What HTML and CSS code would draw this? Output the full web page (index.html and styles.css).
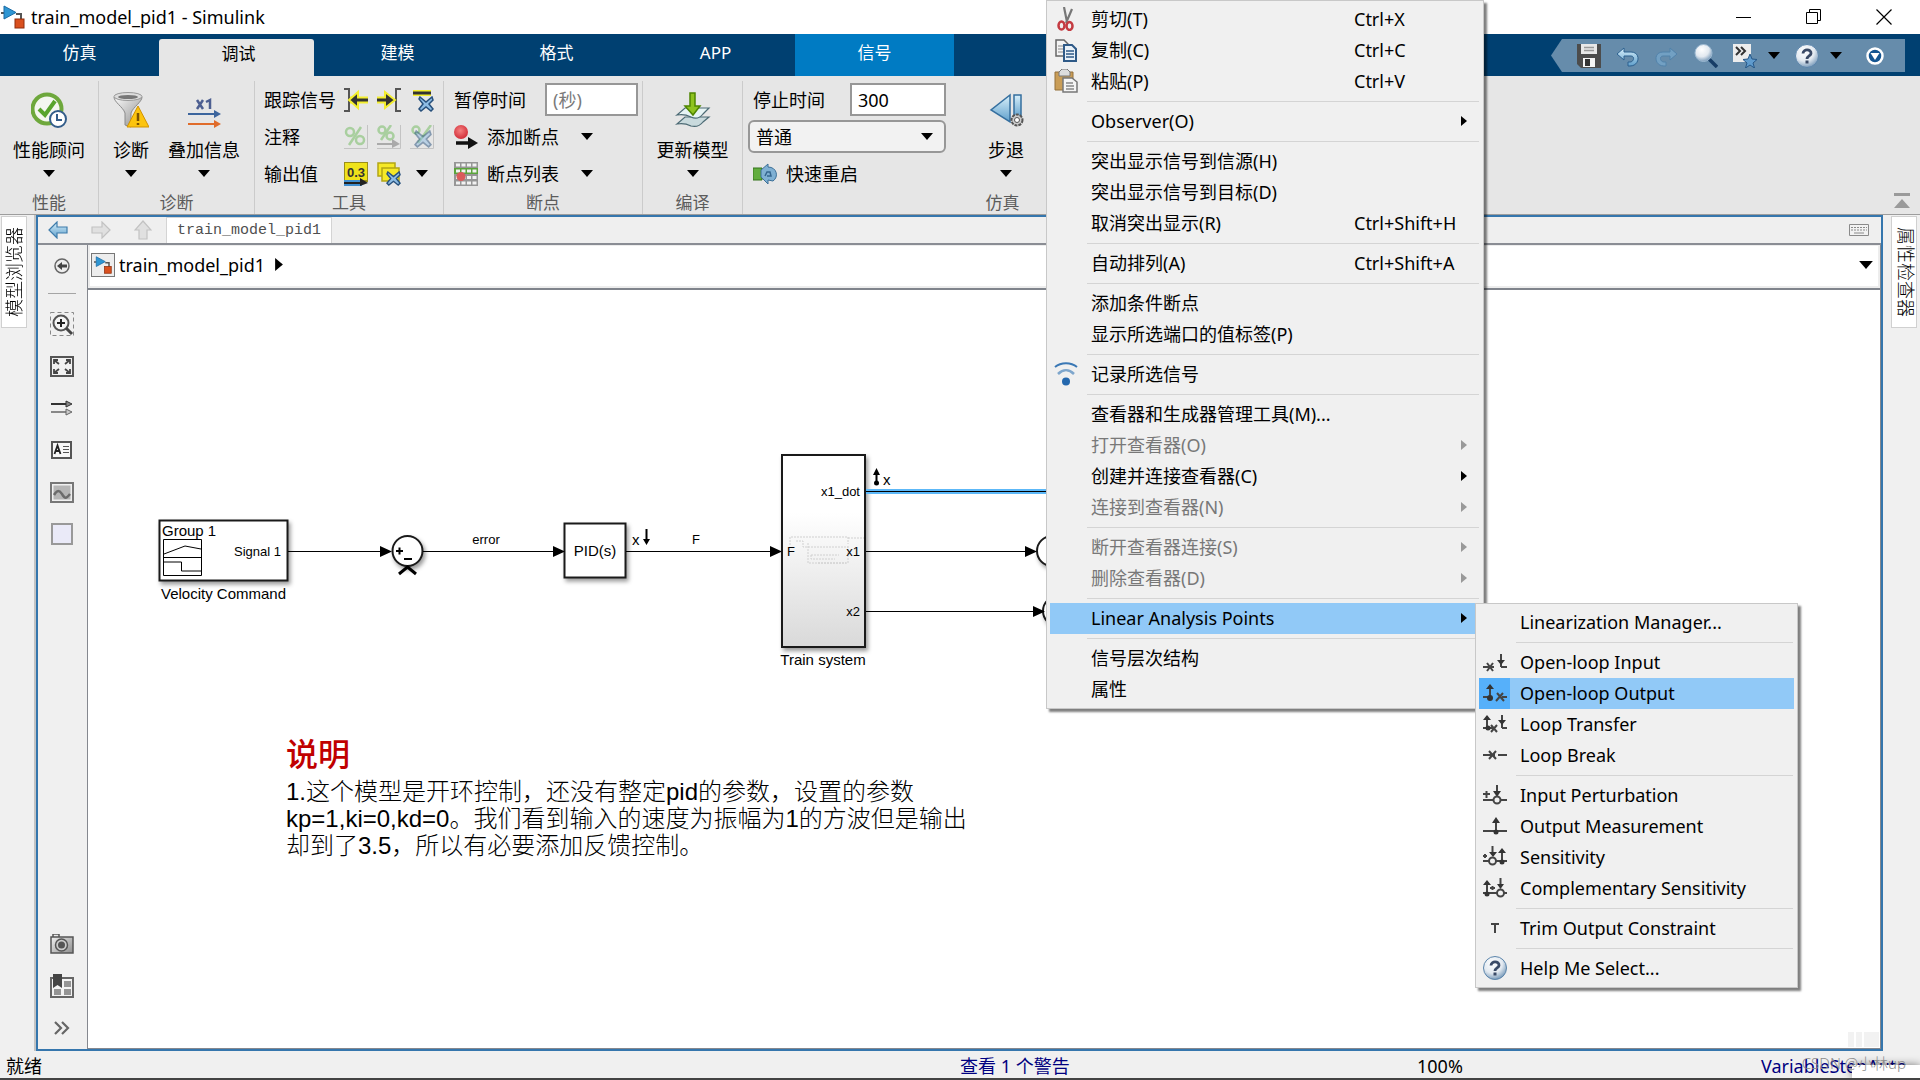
FILE: index.html
```html
<!DOCTYPE html>
<html lang="zh-CN">
<head>
<meta charset="utf-8">
<title>train_model_pid1 - Simulink</title>
<link rel="stylesheet" href="styles.css">
</head>
<body>
<svg class="defs" width="0" height="0" aria-hidden="true">
  <defs>
    <linearGradient id="gBlue" x1="0" y1="0" x2="0" y2="1"><stop offset="0" stop-color="#d8f0fb"/><stop offset="1" stop-color="#5f9fcb"/></linearGradient>
    <linearGradient id="gGrey" x1="0" y1="0" x2="1" y2="1"><stop offset="0" stop-color="#fafafa"/><stop offset="1" stop-color="#8c8c8c"/></linearGradient>
    <linearGradient id="gTrain" x1="0" y1="0" x2="0" y2="1"><stop offset=".3" stop-color="#fff"/><stop offset="1" stop-color="#d9d9d9"/></linearGradient>
    <radialGradient id="gHelp" cx=".4" cy=".3" r=".7"><stop offset="0" stop-color="#fff"/><stop offset=".6" stop-color="#e2e9f0"/><stop offset="1" stop-color="#7f9fbd"/></radialGradient>
    <radialGradient id="gRed" cx=".45" cy=".4" r=".6"><stop offset="0" stop-color="#f58080"/><stop offset="1" stop-color="#d22f3a"/></radialGradient>
  </defs>
  <symbol id="caret" viewBox="0 0 12 7"><path d="M0 0h12L6 7z"/></symbol>
  <symbol id="right" viewBox="0 0 6 10"><path d="M0 0l6 5-6 5z"/></symbol>
  <symbol id="model" viewBox="0 0 24 24"><path d="M0 8h3M15 9h5v6" stroke="#555" stroke-width="2" fill="none"/><path d="M3 1v13l12-6.500z" fill="#2e96d3" stroke="#1a6ba5"/><rect x="14" y="14" width="9" height="9" fill="#d9501e" stroke="#8f2d0c"/></symbol>
  <symbol id="cross" viewBox="0 0 16 16"><path d="M2 1l6 5 6-5 1 3-4 4 4 5-2 2-5-4-5 4-2-2 4-5-4-5z" fill="#8dbce4" stroke="#27507c" stroke-width="1.500"/></symbol>
  <symbol id="help" viewBox="0 0 24 24"><circle cx="12" cy="12" r="11.500" fill="url(#gHelp)" stroke="#5c85ab"/><path d="M8 9.500c0-5 8.500-4.500 8 0-.3 2.500-4 2.500-4 5.500" fill="none" stroke="#3a4a66" stroke-width="2.800"/><rect x="10.500" y="16.500" width="3" height="3" fill="#3a4a66"/></symbol>
</svg>

<header class="titlebar">
  <svg width="24" height="24"><use href="#model"/></svg>
  <h1>train_model_pid1 - Simulink</h1>
  <div class="wincontrols">
    <button aria-label="最小化"><svg width="16" height="16"><path d="M0 8.500h15" stroke="#000"/></svg></button>
    <button aria-label="还原"><svg width="16" height="16"><path d="M.5 3.500h11v11H.5zM3.500 3.500v-3h11v11h-3" fill="none" stroke="#000"/></svg></button>
    <button aria-label="关闭"><svg width="16" height="16"><path d="M.5.5l15 15M15.500.5l-15 15" stroke="#000" stroke-width="1.200"/></svg></button>
  </div>
</header>

<nav class="tabs">
  <button>仿真</button>
  <button class="active">调试</button>
  <button>建模</button>
  <button>格式</button>
  <button>APP</button>
  <button class="context">信号</button>
  <div class="quick">
    <button aria-label="保存"><svg width="24" height="24"><path d="M0 0h24v24H4l-4-4z" fill="#4c4c4c"/><path d="M4 0h16v10H4z" fill="#e8e8e8"/><path d="M7 3.500h10M7 6.500h10" stroke="#999" stroke-width="1.500"/><path d="M6 14h12v9H6z" fill="#f5f5f5"/><path d="M8 15h5v7H8z" fill="#333"/></svg></button>
    <button aria-label="撤销"><svg width="24" height="24"><path d="M8 4v4h7c10 0 9 14-1 14h-2v-4h2c4 0 5-6 1-6H8v4L1 10z" fill="url(#gBlue)" stroke="#2d618f"/></svg></button>
    <button aria-label="重做"><svg width="24" height="24" opacity=".5"><path d="M15 4v4H8c-10 0-9 14 1 14h2v-4H9c-4 0-5-6-1-6h7v4l7-6z" fill="#7fb3dc" stroke="#3d78a8"/></svg></button>
    <button aria-label="搜索"><svg width="24" height="24"><path d="M14 14l9 9" stroke="#173d66" stroke-width="3.500"/><circle cx="9.500" cy="9" r="8.500" fill="url(#gHelp)" stroke="#9db9d1"/></svg></button>
    <button class="withcaret" aria-label="收藏"><svg width="24" height="24"><path d="M0 0h18v18H0z" fill="#ededed"/><path d="M3 3l4 4-4 4M8 3l4 4-4 4" fill="none" stroke="#333" stroke-width="2"/><path d="M17 10l2 5 5 .5-4 3.500 1.500 5-4.500-3-4.500 3 1.500-5-4-3.500 5-.5z" fill="#5f9bcd" stroke="#275888"/></svg><svg class="caret" width="12" height="7"><use href="#caret"/></svg></button>
    <button class="withcaret" aria-label="帮助"><svg width="24" height="24"><use href="#help"/></svg><svg class="caret" width="12" height="7"><use href="#caret"/></svg></button>
    <button aria-label="更多"><svg width="18" height="18"><circle cx="9" cy="9" r="7.500" fill="#145591" stroke="#fff" stroke-width="2.500"/><path d="M4.500 6h9L9 13z" fill="#fff"/></svg></button>
  </div>
</nav>

<section class="ribbon">
  <div class="group g-perf">
    <div class="body">
      <button class="big"><svg width="36" height="36"><circle cx="16" cy="17" r="14.500" fill="#f4f7f0" stroke="#6ea83c" stroke-width="4"/><path d="M8 17l6 6L24 9" fill="none" stroke="#58a42c" stroke-width="4"/><circle cx="27" cy="27" r="8" fill="#fff" stroke="#335d8a" stroke-width="2"/><path d="M26 22v6h5" fill="none" stroke="#335d8a" stroke-width="2"/></svg><span>性能顾问</span><svg class="caret" width="12" height="7"><use href="#caret"/></svg></button>
    </div>
    <div class="label">性能</div>
  </div>
  <div class="group g-diag">
    <div class="body">
      <button class="big"><svg width="36" height="36"><path d="M1 5c0 5 9 10 11 16v12l6 2V21c2-6 11-11 11-16z" fill="url(#gGrey)" stroke="#8a8a8a"/><ellipse cx="15" cy="4.500" rx="14" ry="4" fill="#ddd" stroke="#999"/><ellipse cx="15" cy="5" rx="10" ry="2" fill="#777"/><path d="M25 14l11 21H14z" fill="#fcc40f" stroke="#d19200"/><path d="M25 21v8m0 2v2" stroke="#7a5200" stroke-width="2.500"/></svg><span>诊断</span><svg class="caret" width="12" height="7"><use href="#caret"/></svg></button>
      <button class="big"><svg width="36" height="36"><path d="M11 8l6 9M17 8l-6 9M20 10l4-2v9" fill="none" stroke="#4d5f91" stroke-width="2.500"/><path d="M2 22h28" stroke="#3c659d" stroke-width="2"/><path d="M28 18l7 4-7 4z" fill="#3c659d"/><path d="M2 32h28" stroke="#e06c2b" stroke-width="2"/><path d="M28 28l7 4-7 4z" fill="#e06c2b"/></svg><span>叠加信息</span><svg class="caret" width="12" height="7"><use href="#caret"/></svg></button>
    </div>
    <div class="label">诊断</div>
  </div>
  <div class="group g-tools">
    <div class="body rows">
      <div class="row"><span class="name">跟踪信号</span>
        <button aria-label="跟踪到信源"><svg width="24" height="24"><path d="M0 1h5v22H0" fill="none" stroke="#555" stroke-width="2"/><path d="M24 12H6" stroke="#f3ee2f" stroke-width="7"/><path d="M5 12l9-8v16z" fill="#333" stroke="#f3ee2f" stroke-width="2"/><path d="M24 12h-13" stroke="#333" stroke-width="3"/></svg></button>
        <button aria-label="跟踪到目标"><svg width="24" height="24"><path d="M24 1h-5v22h5" fill="none" stroke="#555" stroke-width="2"/><path d="M0 12h14" stroke="#f3ee2f" stroke-width="7"/><path d="M18 12L8 4v16z" fill="#333" stroke="#f3ee2f" stroke-width="2"/><path d="M0 12h12" stroke="#333" stroke-width="3"/></svg></button>
        <button aria-label="清除跟踪"><svg width="24" height="24"><path d="M3 5h18" stroke="#f3ee2f" stroke-width="6"/><path d="M3 5h18" stroke="#333" stroke-width="3"/><use href="#cross" x="8" y="8" width="16" height="16"/></svg></button></div>
      <div class="row"><span class="name">注释</span>
        <button disabled aria-label="注释"><svg width="24" height="24"><path d="M0 23.500h23.500V0" fill="none" stroke="#c3c3c3"/><circle cx="6" cy="7" r="4" fill="none" stroke="#a9cf9f" stroke-width="2.500"/><circle cx="16" cy="15" r="4" fill="none" stroke="#a9cf9f" stroke-width="2.500"/><path d="M17 2L5 20" stroke="#a9cf9f" stroke-width="2.500"/></svg></button>
        <button disabled aria-label="注释下游"><svg width="24" height="24"><path d="M0 23.500h23.500V0" fill="none" stroke="#c3c3c3"/><circle cx="5" cy="5" r="3.500" fill="none" stroke="#a9cf9f" stroke-width="2.500"/><circle cx="13" cy="11" r="3.500" fill="none" stroke="#a9cf9f" stroke-width="2.500"/><path d="M14 0L4 15" stroke="#a9cf9f" stroke-width="2.500"/><path d="M0 19h16" stroke="#aaa" stroke-width="2"/><path d="M15 14l8 5-8 4z" fill="#aaa"/></svg></button>
        <button disabled aria-label="清除注释"><svg width="24" height="24"><path d="M0 23.500h23.500V0" fill="none" stroke="#c3c3c3"/><circle cx="6" cy="5" r="3.500" fill="none" stroke="#a9cf9f" stroke-width="2.500"/><path d="M21 0L8 18" stroke="#a9cf9f" stroke-width="2.500"/><g opacity=".5"><use href="#cross" x="4" y="5" width="18" height="18"/></g></svg></button></div>
      <div class="row"><span class="name">输出值</span>
        <button aria-label="显示端口值"><svg width="24" height="24"><path d="M0 0h24v19H0z" fill="#efe21a" stroke="#9a8e1a" stroke-width="2"/><text x="3" y="15" class="portval">0.3</text><path d="M0 21h18" stroke="#3f8ed0" stroke-width="6"/><path d="M0 21h18" stroke="#222" stroke-width="2"/><path d="M16 16l8 5-8 3z" fill="#222"/></svg></button>
        <button aria-label="清除端口值"><svg width="24" height="24"><path d="M1 1h17v13H1z" fill="#f6e926" stroke="#b3a516" stroke-width="1.500"/><path d="M5 6h17v13H5z" fill="#f6e926" stroke="#b3a516" stroke-width="1.500"/><use href="#cross" x="9" y="9" width="15" height="15"/></svg></button>
        <button aria-label="更多端口值"><svg class="caret" width="12" height="7"><use href="#caret"/></svg></button></div>
    </div>
    <div class="label">工具</div>
  </div>
  <div class="group g-break">
    <div class="body rows">
      <div class="row field"><label for="pause">暂停时间</label><input id="pause" type="text" placeholder="(秒)"></div>
      <button class="row cmd"><svg width="24" height="24"><circle cx="7" cy="7" r="7" fill="url(#gRed)"/><path d="M2 18h14" stroke="#111" stroke-width="3.500"/><path d="M14 12l10 6-10 6z" fill="#111"/></svg><span>添加断点</span><svg class="caret" width="12" height="7"><use href="#caret"/></svg></button>
      <button class="row cmd"><svg width="24" height="24"><path d="M0 0h24v24H0z" fill="#969696"/><path d="M0 6h24v6H0z" fill="#5ba43b"/><path d="M2 3h21M2 9h21M2 15.500h21M2 21h21" stroke="#f2f2f2" stroke-width="3" stroke-dasharray="4 1.500"/><circle cx="7" cy="14.500" r="4.500" fill="#da5b5b"/></svg><span>断点列表</span><svg class="caret" width="12" height="7"><use href="#caret"/></svg></button>
    </div>
    <div class="label">断点</div>
  </div>
  <div class="group g-compile">
    <div class="body">
      <button class="big"><svg width="36" height="36"><path d="M2 32l8-7h24l-6 5c-4 5-8 5-12 4-4-2-9-3-14-2z" fill="#c9dadd" stroke="#4d6b75" stroke-width="1.200"/><path d="M2 23l8-7h24l-6 6c-4 5-8 5-12 3-4-2-9-3-14-2z" fill="#e7f4f5" stroke="#4d6b75" stroke-width="1.200"/><path d="M15 1h5v13h5l-7 9-8-9h5z" fill="#8fc31f" stroke="#4f8500" stroke-width="1.500"/></svg><span>更新模型</span><svg class="caret" width="12" height="7"><use href="#caret"/></svg></button>
    </div>
    <div class="label">编译</div>
  </div>
  <div class="group g-sim">
    <div class="body">
      <div class="rows">
        <div class="row field"><label for="stop">停止时间</label><input id="stop" type="text" value="300"></div>
        <div class="row pick"><select aria-label="仿真模式"><option>普通</option></select><svg class="caret" width="12" height="7"><use href="#caret"/></svg></div>
        <button class="row cmd"><svg width="24" height="24"><path d="M0 6h9v12H0z" fill="#62ad3e" stroke="#35751c"/><path d="M8 8l7-6v3c9 0 11 10 5 14l-5-1v4l-7-7z" fill="#7fb0d3" stroke="#3b6f97"/><path d="M12 14l2-4h3l1 4h-4" fill="none" stroke="#35668f" stroke-width="1.500"/></svg><span>快速重启</span></button>
      </div>
      <button class="big"><svg width="36" height="36"><path d="M22 3v27L3 18z" fill="url(#gBlue)" stroke="#356f9f" stroke-width="1.500"/><path d="M26 3h7v23h-7z" fill="url(#gBlue)" stroke="#356f9f" stroke-width="1.500"/><circle cx="29" cy="28" r="5.500" fill="#ccc" stroke="#555" stroke-width="2" stroke-dasharray="3 1"/><circle cx="29" cy="28" r="2.500" fill="#fff" stroke="#555"/></svg><span>步退</span><svg class="caret" width="12" height="7"><use href="#caret"/></svg></button>
    </div>
    <div class="label">仿真</div>
  </div>
  <button class="collapse" aria-label="折叠工具条"><svg width="16" height="16"><path d="M0 0h16v3H0zM8 6l8 9H0z" fill="#9a9a9a"/></svg></button>
</section>

<main class="workspace">
  <aside class="dock left"><button>模型浏览器</button></aside>
  <div class="editor">
    <nav class="docbar">
      <button aria-label="后退"><svg width="20" height="18"><path d="M1 9l8-8v5h10v6H9v5z" fill="url(#gBlue)" stroke="#3f7cab" stroke-width="1.200"/></svg></button>
      <button aria-label="前进" disabled><svg width="20" height="18"><path d="M19 9l-8-8v5H1v6h10v5z" fill="#e0e0e0" stroke="#c2c2c2" stroke-width="1.200"/></svg></button>
      <button aria-label="上一级" disabled><svg width="18" height="20"><path d="M9 1l8 9h-4v9H5v-9H1z" fill="#e0e0e0" stroke="#c2c2c2" stroke-width="1.200"/></svg></button>
      <button class="doc">train_model_pid1</button>
      <button class="keys" aria-label="键盘快捷键"><svg width="20" height="12"><path d="M.5.5h19v11H.5z" fill="#f2f2f2" stroke="#8a8a8a"/><path d="M2 3.500h16M2 6h16" stroke="#8a8a8a" stroke-dasharray="2 1"/><path d="M5 9h10" stroke="#8a8a8a"/></svg></button>
    </nav>
    <div class="pane">
      <div class="palette">
        <button aria-label="隐藏浏览器"><svg width="16" height="16"><circle cx="8" cy="8" r="7" fill="#eee" stroke="#666" stroke-width="1.500"/><path d="M3 8l5-4v2.500h5v3H8V12z" fill="#444"/></svg></button>
        <hr>
        <button aria-label="放大区域"><svg width="24" height="24"><path d="M.5.5h23v23H.5z" fill="none" stroke="#888" stroke-dasharray="4 3"/><circle cx="11" cy="11" r="7.500" fill="#f5f5f5" stroke="#555" stroke-width="2"/><path d="M16 16l6 6" stroke="#444" stroke-width="3"/><path d="M7 11h8M11 7v8" stroke="#222" stroke-width="2"/></svg></button>
        <button aria-label="适应视图"><svg width="24" height="21"><path d="M1 1h22v19H1z" fill="#f1f1f1" stroke="#555" stroke-width="2"/><path d="M4 8V4h4M4 4l5 4M20 8V4h-4M20 4l-5 4M4 13v4h4M4 17l5-4M20 13v4h-4M20 17l-5-4" fill="none" stroke="#444" stroke-width="1.800"/></svg></button>
        <button aria-label="采样时间"><svg width="22" height="16"><path d="M0 4h16" stroke="#333" stroke-width="2"/><path d="M15 1l6 3-6 3z" fill="#888" stroke="#333"/><path d="M0 12h16" stroke="#888" stroke-width="2"/><path d="M15 9l6 3-6 3z" fill="#ccc" stroke="#666"/></svg></button>
        <button aria-label="注释"><svg width="21" height="18"><path d="M1 1h19v16H1z" fill="#f7f7f7" stroke="#555" stroke-width="2"/><path d="M3.500 13L6.500 4.500 9.500 13M4.500 10h4" fill="none" stroke="#222" stroke-width="1.800"/><path d="M12 5.500h6M12 8.500h6M12 11.500h6" stroke="#555"/></svg></button>
        <button aria-label="图像"><svg width="24" height="21"><path d="M1 1h22v19H1z" fill="#f0f0f0" stroke="#777" stroke-width="2"/><path d="M3.500 3.500h17v14h-17z" fill="#b5b5b5"/><path d="M4 13c3-5 5-5 8-1 3 5 4 5 8 0" fill="none" stroke="#6b6b6b" stroke-width="2.500"/></svg></button>
        <button aria-label="区域"><svg width="22" height="22"><path d="M1 1h20v20H1z" fill="#eaeaf8" stroke="#999" stroke-width="2"/></svg></button>
        <button class="bottom" aria-label="截图"><svg width="24" height="20"><path d="M3 0h6v3H3zM1 3h22v16H1z" fill="url(#gGrey)" stroke="#555" stroke-width="1.500"/><circle cx="11.500" cy="11" r="6" fill="#ccc" stroke="#555" stroke-width="1.500"/><circle cx="11.500" cy="11" r="3.500" fill="#555"/></svg></button>
        <button aria-label="模型数据"><svg width="24" height="24"><path d="M1 4h22v19H1z" fill="#f3f3f3" stroke="#666" stroke-width="2"/><path d="M14 7h7v6h-7zM4 15h7v6H4zM14 15h7v6h-7z" fill="#959595"/><path d="M3 0h9v14l-4.500-3L3 14z" fill="#444"/></svg></button>
        <button aria-label="展开"><svg width="16" height="14"><path d="M1 1l6 6-6 6M8 1l6 6-6 6" fill="none" stroke="#666" stroke-width="2.200"/></svg></button>
      </div>
      <div class="sheet">
        <div class="crumbs">
          <span class="crumbicon"><svg width="18" height="18"><use href="#model"/></svg></span>
          <a href="#">train_model_pid1</a>
          <svg width="8" height="13"><use href="#right" width="8" height="13"/></svg>
          <button aria-label="历史"><svg class="caret" width="14" height="8"><use href="#caret"/></svg></button>
        </div>
        <div class="canvas">
          <svg class="diagram" width="970" height="440" viewBox="88 290 970 440">
            <g class="shadow">
              <rect x="159.500" y="520.500" width="128" height="60"/>
              <rect x="564.500" y="523.500" width="61" height="54"/>
              <rect class="train" x="782" y="455" width="83" height="192"/>
              <circle cx="407.500" cy="551" r="15"/>
              <circle cx="1052" cy="551" r="15"/>
              <circle cx="1058" cy="611" r="15"/>
            </g>
            <path class="sel" d="M866 491.500h190"/>
            <path class="wire" d="M288 551.500h93M423 551.500h131M626 551.500h146M866 491.500h190M866 551.500h160M866 611.500h168"/>
            <path d="M380 546l12 5.500-12 5.500zM553 546l12 5.500-12 5.500zM770 546l12 5.500-12 5.500zM1025 546l12 5.500-12 5.500zM1033 606l12 5.500-12 5.500z"/>
            <path class="thin" d="M163.500 539.500h38v36h-38zM163.500 557.500h38M164 554l21-8 16 3M164 562h17.500v9H201"/>
            <path class="mark" d="M396 551h7M399.500 547.500v7M404 559h8"/>
            <path class="chevron" d="M399 574l8.500-7 8.500 7"/>
            <path class="mark" d="M646.500 529v12M876.500 474v10"/>
            <path d="M643 539h7l-3.500 6zM873 475h7l-3.500-7z"/><circle cx="876.500" cy="483" r="2.500"/>
            <path class="mini" d="M790 545v-8h58v7M848 538h16M796 541h7v6h45M808 543v20h40v-18M811 555h28M811 555v4h24M818 563h28"/>
            <text x="162" y="536" class="t15">Group 1</text>
            <text x="281" y="556" class="t13 end">Signal 1</text>
            <text x="161" y="599" class="t15">Velocity Command</text>
            <text x="486" y="544" class="t13 mid">error</text>
            <text x="595" y="556" class="t15 mid">PID(s)</text>
            <text x="632" y="545" class="t15">x</text>
            <text x="692" y="544" class="t13">F</text>
            <text x="787" y="556" class="t13">F</text>
            <text x="860" y="496" class="t13 end">x1_dot</text>
            <text x="860" y="556" class="t13 end">x1</text>
            <text x="860" y="616" class="t13 end">x2</text>
            <text x="883" y="485" class="t15">x</text>
            <text x="823" y="665" class="t15 mid">Train system</text>
          </svg>
          <div class="note">
            <h2>说明</h2>
            <p>1.这个模型是开环控制，还没有整定pid的参数，设置的参数<br>kp=1,ki=0,kd=0。我们看到输入的速度为振幅为1的方波但是输出<br>却到了3.5，所以有必要添加反馈控制。</p>
          </div>
          <div class="badge"><i></i><i></i><i></i></div>
        </div>
      </div>
    </div>
  </div>
  <aside class="dock right"><button>属性检查器</button></aside>
</main>

<footer class="status">
  <span>就绪</span>
  <a href="#">查看 1 个警告</a>
  <span>100%</span>
  <a href="#">VariableStepAuto</a>
  <div class="popup"></div>
  <div class="watermark">CSDN @小林up</div>
</footer>

<div class="menu main" role="menu">
  <button role="menuitem"><svg class="ico" width="24" height="24"><path d="M10 0l3 15M18 2l-6 14" stroke="#777" stroke-width="2.200"/><ellipse cx="7.500" cy="18.500" rx="3" ry="4" fill="none" stroke="#c43b42" stroke-width="2.500"/><ellipse cx="15.500" cy="19" rx="3" ry="4" fill="none" stroke="#c43b42" stroke-width="2.500"/></svg><span>剪切(T)</span><kbd>Ctrl+X</kbd></button>
  <button role="menuitem"><svg class="ico" width="24" height="24"><path d="M2 2h8l4 4v12H2z" fill="#f4f4f4" stroke="#666" stroke-width="1.500"/><path d="M4 8h7M4 11h7M4 14h7" stroke="#888"/><path d="M10 7h8l4 4v12H10z" fill="#e9f1f8" stroke="#2f5a87" stroke-width="2"/><path d="M12 13h8M12 16h8M12 19h8" stroke="#2f5a87" stroke-width="1.500"/></svg><span>复制(C)</span><kbd>Ctrl+C</kbd></button>
  <button role="menuitem"><svg class="ico" width="24" height="24"><path d="M1 3h18v18H1z" fill="#c99d57" stroke="#94713a"/><path d="M5 3l3-3h5l3 3v4H5z" fill="#ddd" stroke="#777"/><path d="M9 9h9l5 4v10H9z" fill="#f5f5f5" stroke="#777" stroke-width="1.500"/><path d="M12 14h7M12 17h8M12 20h8" stroke="#888" stroke-width="1.500"/></svg><span>粘贴(P)</span><kbd>Ctrl+V</kbd></button>
  <hr>
  <button role="menuitem" aria-haspopup="true"><span>Observer(O)</span><svg class="sub" width="6" height="10"><use href="#right"/></svg></button>
  <hr>
  <button role="menuitem"><span>突出显示信号到信源(H)</span></button>
  <button role="menuitem"><span>突出显示信号到目标(D)</span></button>
  <button role="menuitem"><span>取消突出显示(R)</span><kbd>Ctrl+Shift+H</kbd></button>
  <hr>
  <button role="menuitem"><span>自动排列(A)</span><kbd>Ctrl+Shift+A</kbd></button>
  <hr>
  <button role="menuitem"><span>添加条件断点</span></button>
  <button role="menuitem"><span>显示所选端口的值标签(P)</span></button>
  <hr>
  <button role="menuitem"><svg class="ico" width="24" height="24"><path d="M1 5c6-5 16-5 22 0" fill="none" stroke="#3a78b5" stroke-width="2"/><path d="M4 12c5-5 11-5 16 0" fill="none" stroke="#7ea6cc" stroke-width="2.500"/><circle cx="12" cy="19.500" r="4" fill="#2468ae"/></svg><span>记录所选信号</span></button>
  <hr>
  <button role="menuitem"><span>查看器和生成器管理工具(M)...</span></button>
  <button role="menuitem" disabled><span>打开查看器(O)</span><svg class="sub" width="6" height="10"><use href="#right"/></svg></button>
  <button role="menuitem"><span>创建并连接查看器(C)</span><svg class="sub" width="6" height="10"><use href="#right"/></svg></button>
  <button role="menuitem" disabled><span>连接到查看器(N)</span><svg class="sub" width="6" height="10"><use href="#right"/></svg></button>
  <hr>
  <button role="menuitem" disabled><span>断开查看器连接(S)</span><svg class="sub" width="6" height="10"><use href="#right"/></svg></button>
  <button role="menuitem" disabled><span>删除查看器(D)</span><svg class="sub" width="6" height="10"><use href="#right"/></svg></button>
  <hr>
  <button role="menuitem" class="hot" aria-haspopup="true"><span>Linear Analysis Points</span><svg class="sub" width="6" height="10"><use href="#right"/></svg></button>
  <hr>
  <button role="menuitem"><span>信号层次结构</span></button>
  <button role="menuitem"><span>属性</span></button>
</div>

<div class="menu submenu" role="menu">
  <button role="menuitem"><span>Linearization Manager...</span></button>
  <hr>
  <button role="menuitem"><svg class="ico line" width="24" height="24"><path d="M0 17h11M4 13l6 8M10 13l-6 8M18 4v10M18 17h6M18 14v3"/><path class="f" d="M14 10h8l-4 5z"/></svg><span>Open-loop Input</span></button>
  <button role="menuitem" class="hot checked"><svg class="ico line" width="24" height="24"><path d="M0 16h7M7 4v12M19 16h5M14 12l7 8M20 12l-7 8"/><path class="f" d="M3 8h8L7 3z"/><circle class="f" cx="7" cy="17" r="3"/></svg><span>Open-loop Output</span></button>
  <button role="menuitem"><svg class="ico line" width="24" height="24"><path d="M0 16h12M4 4v12M8 13l6 7M14 13l-6 7M19 3v13M19 16h5"/><path class="f" d="M0 8h8L4 3zM15 8h8l-4 5z"/><circle class="f" cx="5" cy="16" r="2.500"/></svg><span>Loop Transfer</span></button>
  <button role="menuitem"><svg class="ico line" width="24" height="24"><path d="M0 12h12M15 12h9M6 8l7 8M13 8l-7 8"/></svg><span>Loop Break</span></button>
  <hr>
  <button role="menuitem"><svg class="ico line" width="24" height="24"><path d="M0 11h7M3.500 8v7M0 17h10M18 17h6M14 2v8"/><path class="f" d="M10 8h8l-4 6z"/><circle cx="14" cy="17" r="3.500"/></svg><span>Input Perturbation</span></button>
  <button role="menuitem"><svg class="ico line" width="24" height="24"><path d="M0 17h24M13 6v12"/><path class="f" d="M9 9h8l-4-6z"/><circle class="f" cx="13" cy="18" r="2.500"/></svg><span>Output Measurement</span></button>
  <button role="menuitem"><svg class="ico line" width="24" height="24"><path d="M0 11h4M2 9v4M0 16h6M13 16h11M9.500 1v8M19 5v12"/><path class="f" d="M6 7h8l-4 5zM15 8h8l-4-5z"/><circle cx="9.500" cy="16" r="3.500"/><circle class="f" cx="19" cy="17" r="2.500"/></svg><span>Sensitivity</span></button>
  <button role="menuitem"><svg class="ico line" width="24" height="24"><path d="M7 12h5M9.500 10v4M0 17h14M4 6v12M21 17h3M17.500 2v8"/><path class="f" d="M0 9h8L4 4zM14 8h7l-3.500 5z"/><circle cx="17.500" cy="17" r="3.500"/><circle class="f" cx="4" cy="18" r="2.500"/></svg><span>Complementary Sensitivity</span></button>
  <hr>
  <button role="menuitem"><svg class="ico line" width="24" height="24"><path d="M8 8h8M12 8v9"/></svg><span>Trim Output Constraint</span></button>
  <hr>
  <button role="menuitem"><svg class="ico" width="24" height="24"><use href="#help"/></svg><span>Help Me Select...</span></button>
</div>
</body>
</html>
```
FILE: styles.css
```css
* { box-sizing: border-box; }
body {
  margin: 0;
  height: 100vh;
  display: flex;
  flex-direction: column;
  position: relative;
  overflow: hidden;
  background: #f0f0f0;
  color: #000;
  font: 18px/24px "Noto Sans", "Noto Sans CJK SC", sans-serif;
}
button, input, select { font: inherit; color: inherit; }
button { margin: 0; padding: 0; border: 0; background: none; display: flex; align-items: center; }
a { color: inherit; text-decoration: none; }
svg { display: block; flex: none; }
.defs { position: absolute; }
hr { margin: 0; border: 0; }

.titlebar { height: 34px; flex: none; display: flex; align-items: center; gap: 6px; padding: 0 28px 0 1px; background: #fff; }
.titlebar h1 { margin: 0; font-size: 18px; font-weight: 400; }
.wincontrols { margin-left: auto; display: flex; gap: 54px; }

.tabs { height: 42px; flex: none; display: flex; align-items: flex-end; background: #004071; color: #fff; font-size: 17px; }
.tabs > button { width: 159px; height: 42px; padding-bottom: 4px; justify-content: center; }
.tabs > .active { width: 155px; margin-right: 4px; height: 37px; padding: 0 0 8px 4px; border-radius: 3px 3px 0 0; background: #e6e6e6; color: #000; }
.tabs > .context { background: #007bc3; }
.quick {
  height: 33px; margin: 0 15px 4px auto; padding: 0 21px 0 26px;
  display: flex; align-items: center; gap: 15px;
  background: #668cab;
  clip-path: polygon(11px 0, 100% 0, 100% 100%, 11px 100%, 0 50%);
}
.withcaret { gap: 11px; }
.quick button:last-child { margin-left: 9px; }
.caret { fill: #000; }

.ribbon { height: 139px; flex: none; display: flex; padding-top: 5px; background: #e6e6e6; border-bottom: 1px solid #9d9d9d; }
.group { display: flex; flex-direction: column; border-right: 1px solid #cbcbcb; white-space: nowrap; }
.group .body { flex: 1; display: flex; justify-content: center; }
.group .label { height: 22px; line-height: 22px; text-align: center; font-size: 17px; color: #5c5c5c; }
.g-perf { width: 99px; }
.g-diag { width: 156px; }
.g-diag .body { gap: 19px; }
.g-tools { width: 189px; }
.g-break { width: 199px; }
.g-compile { width: 100px; }
.g-sim { width: 519px; border: 0; }
.g-sim .body { justify-content: flex-start; }
.big { flex-direction: column; justify-content: flex-start; padding-top: 11px; }
.big span { margin: 10px 0 8px; }
.g-sim .big { margin-left: 42px; }
.rows { display: flex; flex-direction: column; }
.row { height: 37px; display: flex; align-items: center; }
.g-tools .row { padding-left: 9px; }
.g-tools .name { width: 80px; }
.g-tools .row button { width: 24px; margin-right: 9px; justify-content: center; }
.portval { font: bold 13px "Liberation Sans", sans-serif; fill: #333; }
.g-break .row { padding-left: 10px; }
.field input { height: 33px; padding: 0 6px; border: 2px solid #979797; border-radius: 0; background: #fff; outline: 0; }
.field input::placeholder { color: #7a7a7a; }
.g-break input { width: 93px; margin-left: 19px; }
.cmd { gap: 9px; }
.cmd .caret { margin-left: 13px; }
.g-sim .rows { width: 203px; padding-left: 5px; }
.g-sim .field { padding-left: 5px; }
.g-sim .cmd { padding-left: 5px; }
.g-sim input { width: 96px; margin-left: 25px; }
.pick { position: relative; }
.pick select { width: 198px; height: 33px; padding: 0 6px; border: 2px solid #979797; border-radius: 6px; background: #f2f2f2; appearance: none; }
.pick .caret { position: absolute; right: 13px; pointer-events: none; }
.collapse { margin: auto 10px 5px auto; }

.workspace { flex: 1; min-height: 0; display: flex; }
.dock { width: 36px; flex: none; padding: 1px; border-right: 2px solid #c4c4c4; }
.dock.right { width: 37px; border: 0; padding: 1px 2px 0 8px; }
.dock button {
  width: 26px; height: 112px; justify-content: center;
  border: 1px solid #d0d0d0; background: #fff;
  writing-mode: vertical-rl;
  font: 300 18px/24px "Liberation Mono", "Noto Sans CJK SC", monospace;
  text-orientation: sideways;
}
.dock.left button { padding-right: 4px; transform: rotate(180deg); }
.editor { flex: 1; min-width: 0; display: flex; flex-direction: column; border: 2px solid #3576ad; }
.docbar { height: 28px; flex: none; display: flex; align-items: center; padding-left: 10px; border-bottom: 2px solid #8a8d94; background: #efefef; }
.docbar button { width: 43px; }
.docbar .doc {
  width: 166px; height: 26px; justify-content: center; margin-left: -11px;
  border: 1px solid #d4d4d4; border-bottom: 0; background: #fff; color: #4f4f4f;
  font: 15px/24px "Liberation Mono", monospace;
}
.docbar .keys { width: 20px; margin: 0 12px 0 auto; }
.pane { flex: 1; min-height: 0; display: flex; }
.palette { width: 49px; flex: none; display: flex; flex-direction: column; align-items: center; padding-right: 2px; }
.palette button { width: 42px; height: 42px; justify-content: center; }
.palette hr { width: 28px; height: 1px; margin: 6px 0 9px; background: #a5a5a5; }
.palette .bottom { margin-top: auto; }
.sheet { flex: 1; min-width: 0; display: flex; flex-direction: column; border: 1px solid #85888f; border-top: 0; background: #fff; }
.crumbs {
  height: 43px; flex: none; display: flex; align-items: center; gap: 4px; padding: 0 5px 3px 1px;
  border: 2px solid #ededed; border-top-width: 1px;
  box-shadow: 0 2px #80848c;
}
.crumbicon { padding: 2px; border: 1px solid #777; background: #ededed; }
.crumbs > svg { margin-left: 6px; }
.crumbs button { margin-left: auto; }
.canvas { flex: 1; min-height: 0; position: relative; margin-top: 2px; overflow: hidden; }
.diagram { position: absolute; left: 0; top: 0; font-family: "Liberation Sans", sans-serif; }
.shadow > * { fill: #fff; stroke: #1a1a1a; stroke-width: 2; filter: drop-shadow(2px 3px 2px rgba(0, 0, 0, .4)); }
.shadow .train { fill: url(#gTrain); }
.sel { stroke: #5cb8f8; stroke-width: 5; }
.wire { fill: none; stroke: #000; }
.wire, .thin { stroke-width: 1; }
.thin { fill: none; stroke: #000; }
.mark { fill: none; stroke: #000; stroke-width: 2; }
.chevron { fill: none; stroke: #000; stroke-width: 3; }
.mini { fill: none; stroke: #d0d0d0; stroke-dasharray: 2 1; }
.t15 { font-size: 15px; }
.t13 { font-size: 13px; }
.mid { text-anchor: middle; }
.end { text-anchor: end; }
.note { position: absolute; left: 198px; top: 442px; white-space: nowrap; font-family: "Liberation Sans", "Noto Sans CJK SC", sans-serif; }
.note h2 { margin: 0; color: #c00000; font-size: 32px; line-height: 46px; font-weight: 500; }
.note p { margin: 0; font-size: 24px; line-height: 27px; font-weight: 300; }
.badge { position: absolute; right: 1px; bottom: 1px; display: flex; gap: 2px; }
.badge i { width: 6px; height: 15px; background: #f2f2f2; }
.badge i:last-child { width: 15px; }

.status {
  height: 29px; flex: none; display: grid; grid-template-columns: 50% 457px 344px 1fr;
  align-items: center; position: relative; overflow: hidden;
  padding-top: 2px;
  border-bottom: 2px solid #444; white-space: nowrap;
}
.status > span:first-child { padding-left: 6px; }
.status a { color: #000080; }
.popup { position: absolute; right: 0; bottom: 0; width: 68px; height: 13px; background: #fff; box-shadow: 0 0 8px rgba(0, 0, 0, .5); }
.watermark { position: absolute; right: 14px; top: 0; font-size: 15px; font-weight: 300; color: #8c8c8c; }

.menu {
  position: absolute; z-index: 2; padding: 3px;
  border: 1px solid #c8c8c8; background: #f0f0f0;
  box-shadow: 3px 3px 2px rgba(0, 0, 0, .5);
}
.menu.main { left: 1046px; top: 0; width: 438px; }
.menu.submenu { left: 1475px; top: 603px; width: 323px; }
.menu button { position: relative; width: 100%; height: 31px; padding: 0 0 2px 41px; text-align: left; }
.menu hr { height: 1px; margin: 4px 1px 4px 37px; background: #d4d4d4; }
.menu kbd { position: absolute; left: 304px; font: inherit; }
.menu .sub { position: absolute; right: 13px; }
.menu .ico { position: absolute; left: 4px; top: 3px; }
.menu button:disabled { color: #787878; }
.menu button:disabled .sub { fill: #999; }
.menu .hot { background: #91c9f7; }
.menu .checked { background: linear-gradient(90deg, #56b0fa 31px, #91c9f7 31px); }
.line { fill: none; stroke: #444; stroke-width: 2; }
.line .f { fill: #333; stroke: none; }
```
